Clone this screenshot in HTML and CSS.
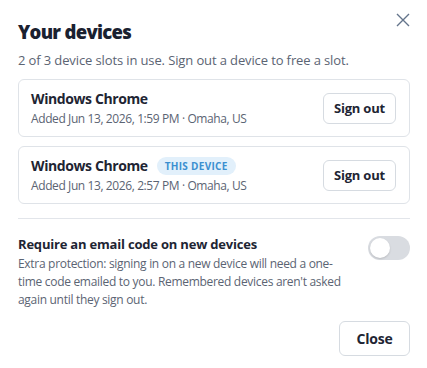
FILE: index.html
```html
<!DOCTYPE html>
<html>
<head>
<meta charset="utf-8">
<link rel="stylesheet" href="styles.css">
</head>
<body>
<div class="modal">
  <div class="header">
    <h1 class="title">Your devices</h1>
    <button class="close-x" aria-label="Close">
      <svg width="14" height="14" viewBox="0 0 14 14"><path d="M1 1L13 13M13 1L1 13" stroke="#64748b" stroke-width="1.4" fill="none"/></svg>
    </button>
  </div>
  <p class="subtitle">2 of 3 device slots in use. Sign out a device to free a slot.</p>
  <div class="devices">
    <div class="device">
      <div class="info">
        <div class="name">Windows Chrome</div>
        <div class="meta">Added Jun 13, 2026, 1:59 PM · Omaha, US</div>
      </div>
      <button class="btn">Sign out</button>
    </div>
    <div class="device">
      <div class="info">
        <div class="name">Windows Chrome <span class="badge">THIS DEVICE</span></div>
        <div class="meta">Added Jun 13, 2026, 2:57 PM · Omaha, US</div>
      </div>
      <button class="btn">Sign out</button>
    </div>
  </div>
  <div class="setting">
    <div class="setting-text">
      <div class="setting-title">Require an email code on new devices</div>
      <div class="setting-desc">Extra protection: signing in on a new device will need a one-time code emailed to you. Remembered devices aren't asked again until they sign out.</div>
    </div>
    <div class="toggle"><div class="knob"></div></div>
  </div>
  <div class="footer">
    <button class="btn btn-close">Close</button>
  </div>
</div>
</body>
</html>
```
FILE: styles.css
```css
* { box-sizing: border-box; }
body {
  margin: 0;
  background: #fff;
  font-family: "Open Sans", "Noto Sans", sans-serif;
  color: #1e2533;
}
.modal {
  padding: 17px 17px 0 18px;
}
.header {
  display: flex;
  justify-content: space-between;
  align-items: flex-start;
}
.title {
  margin: 0;
  font-size: 18.5px;
  font-weight: 800;
  line-height: 30px;
  color: #1a2130;
  letter-spacing: -0.7px;
}
.close-x {
  border: 0;
  background: none;
  padding: 0;
  margin: -6px -2px 0 0;
  width: 18px;
  height: 18px;
  display: flex;
  align-items: center;
  justify-content: center;
}
.subtitle {
  margin: 4px 0 0;
  font-size: 13px;
  line-height: 18px;
  color: #5b6473;
  letter-spacing: -0.12px;
}
.devices {
  margin-top: 10px;
  display: flex;
  flex-direction: column;
  gap: 9px;
  padding-bottom: 14px;
  border-bottom: 1px solid #e2e5ea;
}
.device {
  border: 1px solid #dfe3e8;
  border-radius: 6px;
  height: 58px;
  padding: 0 13px 0 12px;
  display: flex;
  align-items: center;
  justify-content: space-between;
}
.name {
  font-size: 14px;
  font-weight: 700;
  line-height: 20px;
  color: #1e2533;
  display: flex;
  align-items: center;
  letter-spacing: -0.4px;
}
.badge {
  margin-left: 9px;
  background: #e2f0fb;
  color: #3b8fd0;
  font-size: 10px;
  font-weight: 700;
  letter-spacing: 0.3px;
  border-radius: 9px;
  height: 18px;
  line-height: 18px;
  padding: 0 8px;
}
.meta {
  font-size: 12px;
  line-height: 17px;
  color: #5b6473;
  margin-top: 1px;
  letter-spacing: -0.4px;
}
.btn {
  font-family: inherit;
  background: #fff;
  border: 1px solid #d6dbe1;
  border-radius: 6px;
  height: 31px;
  padding: 0 10px;
  font-size: 13px;
  font-weight: 700;
  color: #1e2533;
  letter-spacing: -0.2px;
}
.setting {
  display: flex;
  justify-content: space-between;
  align-items: flex-start;
  padding-top: 16px;
}
.setting-text { width: 326px; }
.setting-title {
  font-size: 13px;
  font-weight: 700;
  line-height: 18px;
  color: #1e2533;
  letter-spacing: -0.2px;
}
.setting-desc {
  margin-top: 2px;
  font-size: 12px;
  line-height: 18px;
  color: #5b6473;
  letter-spacing: -0.3px;
}
.toggle {
  width: 42px;
  height: 24px;
  border-radius: 12px;
  background: #d9dce1;
  margin-top: 1px;
  padding: 2px;
}
.knob {
  width: 20px;
  height: 20px;
  border-radius: 50%;
  background: #fff;
  box-shadow: 0 1px 2px rgba(0,0,0,0.15);
}
.footer {
  display: flex;
  justify-content: flex-end;
  margin-top: 12px;
}
.btn-close {
  height: 35px;
  width: 71px;
  font-size: 14px;
}
```
